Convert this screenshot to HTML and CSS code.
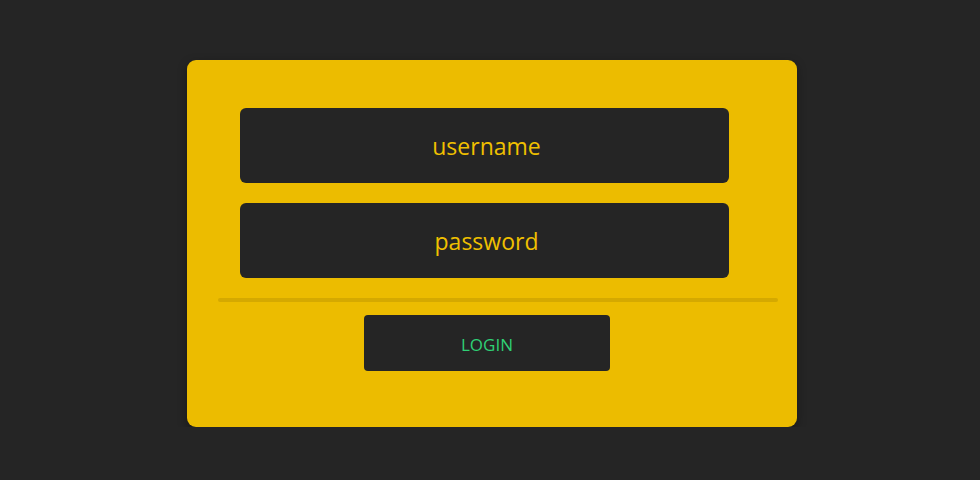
FILE: index.html
```html
<!DOCTYPE html>
<html lang="en">
  <head>
    <meta charset="UTF-8" />
    <meta name="viewport" content="width=device-width, initial-scale=1.0" />
    <title>Login</title>
    <link rel="stylesheet" href="styles.css">
  </head>
  <body>
    <div class="login-card">
      <form id="loginForm">
        <div class="fields">
          <input type="text" class="field" placeholder="username" />
          <input type="password" class="field" placeholder="password" />
        </div>
        <hr class="divider" />
        <button type="submit" class="login-btn">LOGIN</button>
      </form>
    </div>
  </body>
</html>
```

FILE: styles.css
```css
* {
  box-sizing: border-box;
  margin: 0;
  padding: 0;
}

body {
  font-family: "Open Sans", "Liberation Sans", sans-serif;
  background-color: #252525;
  padding-top: 60px;
}

.login-card {
  width: 610px;
  height: 367px;
  margin: 0 auto;
  padding: 48px 19px 0 31px;
  background: #ecbc00;
  border-radius: 9px;
  box-shadow: 0 3px 10px rgba(0, 0, 0, 0.35);
  position: relative;
  left: 2px;
}

form {
  display: flex;
  flex-direction: column;
  align-items: flex-start;
}

.fields {
  display: flex;
  flex-direction: column;
  gap: 20px;
  width: 489px;
  margin-left: 22px;
}

.field {
  height: 75px;
  padding-left: 4px;
  padding-top: 0;
  border: none;
  border-radius: 6px;
  background-color: #252525;
  color: #ecbc00;
  font-family: inherit;
  font-size: 23px;
  text-align: center;
  outline: none;
}

.field::placeholder {
  color: #f0c000;
  opacity: 1;
}

.divider {
  width: 560px;
  height: 4px;
  margin: 20px 0 13px;
  border: none;
  border-radius: 2px;
  background-color: #d5a900;
}

.login-btn {
  width: 246px;
  height: 56px;
  margin-left: 146px;
  padding-top: 3px;
  border: none;
  border-radius: 4px;
  background-color: #252525;
  color: #2fd075;
  font-family: inherit;
  font-size: 17px;
  cursor: pointer;
}
```
